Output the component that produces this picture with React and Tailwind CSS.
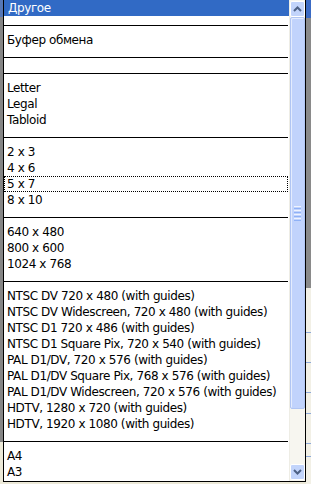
import React from "react";

const Sep = () => (
  <div className="h-4 relative">
    <div className="absolute left-0 right-px top-[9px] h-px bg-black" />
  </div>
);

const Item = ({ children }) => (
  <div className="h-4 pl-[3px] whitespace-nowrap">{children}</div>
);

function Chevron({ up }) {
  return (
    <svg width="9" height="6" viewBox="0 0 9 6">
      <path
        d={up ? "M1 5 L4.5 1.5 L8 5" : "M1 1 L4.5 4.5 L8 1"}
        fill="none"
        stroke="#4d6185"
        strokeWidth="2"
      />
    </svg>
  );
}

export default function App() {
  return (
    <div className="w-[311px] h-[484px] flex bg-[#ece9d8] overflow-hidden font-['DejaVu_Sans',sans-serif] text-[12px] leading-4 text-black">
      {/* left background strip */}
      <div className="w-[3px] flex flex-col">
        <div className="h-[17px] bg-[#5677b5]" />
        <div className="h-[425px] bg-[#858585]" />
        <div className="flex-1 bg-[#ece9d8]" />
      </div>

      {/* list box */}
      <div className="w-[303px] h-[482px] border-l border-r border-b border-black bg-white flex">
        <div className="w-[285px] flex flex-col tracking-[-0.4px]">
          <div className="h-4 pl-[4px] bg-[#316ac5] text-white">Другое</div>
          <Sep />
          <Item>Буфер обмена</Item>
          <Sep />
          <Sep />
          <Item>Letter</Item>
          <Item>Legal</Item>
          <Item>Tabloid</Item>
          <Sep />
          <Item>2 x 3</Item>
          <Item>4 x 6</Item>
          <div className="h-4 pl-[2px] border border-dotted border-black leading-[14px] mr-px">5 x 7</div>
          <Item>8 x 10</Item>
          <Sep />
          <Item>640 x 480</Item>
          <Item>800 x 600</Item>
          <Item>1024 x 768</Item>
          <Sep />
          <Item>NTSC DV 720 x 480 (with guides)</Item>
          <Item>NTSC DV Widescreen, 720 x 480 (with guides)</Item>
          <Item>NTSC D1 720 x 486 (with guides)</Item>
          <Item>NTSC D1 Square Pix, 720 x 540 (with guides)</Item>
          <Item>PAL D1/DV, 720 x 576 (with guides)</Item>
          <Item>PAL D1/DV Square Pix, 768 x 576 (with guides)</Item>
          <Item>PAL D1/DV Widescreen, 720 x 576 (with guides)</Item>
          <Item>HDTV, 1280 x 720 (with guides)</Item>
          <Item>HDTV, 1920 x 1080 (with guides)</Item>
          <Sep />
          <Item>A4</Item>
          <Item>A3</Item>
        </div>

        {/* scrollbar */}
        <div className="w-4 flex flex-col bg-[#f7f6f0] border-l border-[#eeede5]">
          <div className="mt-px h-4 w-[15px] rounded-[2px] border border-white bg-[#c2d4fb] flex items-center justify-center">
            <Chevron up />
          </div>
          <div className="h-[392px] w-[15px] rounded-[2px] border border-[#b0c5f3] bg-[#c1d3fc] flex items-center justify-center shadow-[inset_1px_1px_0_#e4ecfe]">
            <div className="flex flex-col gap-px">
              <div className="w-[7px] h-px bg-[#eef3fe]" />
              <div className="w-[7px] h-px bg-[#8fb1f6]" />
              <div className="w-[7px] h-px bg-[#eef3fe]" />
              <div className="w-[7px] h-px bg-[#8fb1f6]" />
              <div className="w-[7px] h-px bg-[#eef3fe]" />
              <div className="w-[7px] h-px bg-[#8fb1f6]" />
              <div className="w-[7px] h-px bg-[#eef3fe]" />
              <div className="w-[7px] h-px bg-[#8fb1f6]" />
            </div>
          </div>
          <div className="flex-1" />
          <div className="mb-px h-4 w-[15px] rounded-[2px] border border-white bg-[#c2d4fb] flex items-center justify-center">
            <Chevron />
          </div>
        </div>
      </div>

      {/* right background strip */}
      <div className="w-[5px] flex flex-col">
        <div className="h-[18px] bg-[#3a6ac4]" />
        <div className="h-[270px] bg-[#8a8a8a]" />
        <div className="flex-1 flex flex-col bg-[#f2f0e6]">
          <div className="h-[44px]" />
          <div className="h-px bg-[#8ea9d8]" />
          <div className="h-[29px]" />
          <div className="h-px bg-[#8ea9d8]" />
          <div className="h-[29px]" />
          <div className="h-px bg-[#8ea9d8]" />
          <div className="h-[20px]" />
          <div className="h-px bg-[#8ea9d8]" />
          <div className="h-[29px]" />
          <div className="h-px bg-[#8ea9d8]" />
          <div className="h-[12px]" />
          <div className="h-px bg-[#8ea9d8]" />
        </div>
      </div>
    </div>
  );
}
